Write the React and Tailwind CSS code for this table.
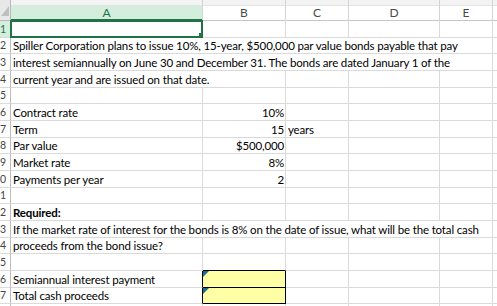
import React from "react";

const colW = ["w-[192px]", "w-[83px]", "w-[63px]", "w-[91px]", "w-[53px]"];
const colName = ["A", "B", "C", "D", "E"];

// row heights (Excel rows are ~16.7px at this zoom)
const rowH = [
  "h-[17px]", "h-[16px]", "h-[17px]", "h-[17px]", "h-[16px]", "h-[17px]",
  "h-[17px]", "h-[16px]", "h-[17px]", "h-[17px]", "h-[16px]", "h-[17px]",
  "h-[17px]", "h-[16px]", "h-[17px]", "h-[17px]", "h-[16px]", "h-[17px]",
];

const Cell = ({ w, right, className = "", children }) => (
  <div
    className={`${w} h-full shrink-0 flex items-end whitespace-nowrap border-r border-b border-[#dadada] px-[2px] leading-[15px] ${right ? "justify-end pr-[1px]" : ""} ${className}`}
  >
    {children}
  </div>
);

const RowHead = ({ n, active }) => (
  <div
    className={`w-[11px] h-full shrink-0 flex items-end justify-end overflow-hidden border-r border-b border-r-[#bdbdbd] border-b-[#dadada] pr-[4px] leading-[15px] text-[10.5px] tracking-normal ${active ? "bg-[#d3eedd] text-[#217346]" : "bg-white text-[#444]"}`}
  >
    <span>{n}</span>
  </div>
);

const Row = ({ n, children }) => (
  <div className={`flex ${rowH[n - 1]}`}>
    <RowHead n={n} active={n === 1} />
    {children}
    <div className="flex-1 h-full border-b border-[#dadada]" />
  </div>
);

// plain row: values for A..E
const Plain = ({ n, a, b, c, bold, bBox, aBox, bTop }) => (
  <Row n={n}>
    <Cell w={colW[0]} className={`${bold ? "font-bold" : ""} ${aBox ? "border-r-black" : ""}`}>{a}</Cell>
    <Cell
      w={colW[1]}
      right
      className={`${bBox ? "relative bg-[#ffffa6] border-r-black border-b-black" : ""} ${bTop ? "border-b-black" : ""}`}
    >
      {bBox && (
        <svg className="absolute left-0 top-0 z-10" width="6" height="6" viewBox="0 0 6 6">
          <polygon points="0,0 6,0 0,6" fill="#1b6d8f" />
        </svg>
      )}
      {b}
    </Cell>
    <Cell w={colW[2]}>{c}</Cell>
    <Cell w={colW[3]} />
    <Cell w={colW[4]} />
  </Row>
);

// long text that runs over the next cells (Excel hides the grid under it)
const Spill = ({ n, text, span }) => (
  <Row n={n}>
    {span === "AE" ? (
      <Cell w="w-[482px]">{text}</Cell>
    ) : (
      <>
        <Cell w="w-[275px]">{text}</Cell>
        <Cell w={colW[2]} />
        <Cell w={colW[3]} />
        <Cell w={colW[4]} />
      </>
    )}
  </Row>
);

const Header = () => (
  <div className="flex h-[21px] tracking-normal">
    <div className="relative w-[11px] h-full shrink-0 bg-[#e8e8e8] border-r border-b border-[#b8b8b8]">
      <svg className="absolute left-0 top-0" width="10" height="20" viewBox="0 0 10 20">
        <polygon points="1,16 9,16 9,6" fill="#bfbfbf" />
      </svg>
    </div>
    {colName.map((c, i) => (
      <div key={c} className={`${colW[i]} h-full shrink-0 flex flex-col border-r border-[#d4d4d4]`}>
        <div className="h-[6px] bg-[#f3f3f3] border-b border-[#e4e4e4]" />
        <div
          className={`h-[15px] flex items-center justify-center text-[12px] leading-[14px] ${i === 0 ? "bg-[#d3eedd] text-[#217346] border-b-2 border-[#217346]" : "bg-white text-[#4a4a4a] border-b border-[#c6c6c6]"}`}
        >
          {c}
        </div>
      </div>
    ))}
    <div className="flex-1 h-full flex flex-col">
      <div className="h-[6px] bg-[#f3f3f3] border-b border-[#e4e4e4]" />
      <div className="h-[15px] bg-white border-b border-[#c6c6c6]" />
    </div>
  </div>
);

export default function App() {
  return (
    <div className="w-[497px] h-[306px] overflow-hidden bg-white text-black text-[11.5px] tracking-[-0.15px] font-[Lato,sans-serif]">
      <Header />

      <Row n={1}>
        <div className="relative w-[192px] h-full shrink-0 border-r border-b border-[#dadada]">
          <div className="absolute -left-px -top-px -right-px -bottom-px border-2 border-[#217346]" />
          <div className="absolute right-[-1px] bottom-0 w-[4px] h-[4px] bg-[#217346]" />
        </div>
        <Cell w={colW[1]} />
        <Cell w={colW[2]} />
        <Cell w={colW[3]} />
        <Cell w={colW[4]} />
      </Row>
      <Spill n={2} span="AE" text="Spiller Corporation plans to issue 10%, 15-year, $500,000 par value bonds payable that pay" />
      <Spill n={3} span="AE" text="interest semiannually on June 30 and December 31. The bonds are dated January 1 of the" />
      <Spill n={4} span="AB" text="current year and are issued on that date." />
      <Plain n={5} />
      <Plain n={6} a="Contract rate" b="10%" />
      <Plain n={7} a="Term" b="15" c="years" />
      <Plain n={8} a="Par value" b="$500,000" />
      <Plain n={9} a="Market rate" b="8%" />
      <Plain n={10} a="Payments per year" b="2" />
      <Plain n={11} />
      <Plain n={12} a="Required:" bold />
      <Spill n={13} span="AE" text="If the market rate of interest for the bonds is 8% on the date of issue, what will be the total cash" />
      <Plain n={14} a="proceeds from the bond issue?" />
      <Plain n={15} bTop />
      <Plain n={16} a="Semiannual interest payment" aBox bBox />
      <Plain n={17} a="Total cash proceeds" aBox bBox />
      <Plain n={18} />
    </div>
  );
}
